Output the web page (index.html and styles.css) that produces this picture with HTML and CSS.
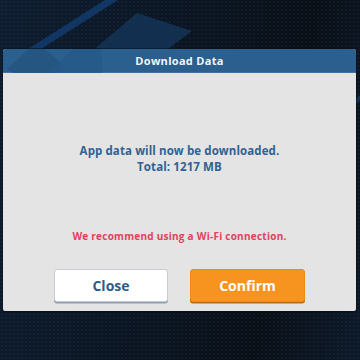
FILE: index.html
```html
<!DOCTYPE html>
<html>
<head>
<meta charset="utf-8">
<link rel="stylesheet" href="styles.css">
</head>
<body>
<div class="screen">
  <svg class="bg-deco" width="360" height="360" viewBox="0 0 360 360">
    <polygon points="105,0 118,0 30,56 17,56" fill="#123a6a" opacity="0.9"/>
    <polygon points="137,13 192,31 140,70 70,70" fill="#15365a" opacity="0.8"/>
    <polygon points="360,95 360,101 318,132 312,132" fill="#163656" opacity="0.9"/>
  </svg>
  <div class="dialog">
    <div class="dialog-header">
      <svg class="header-deco" width="120" height="24" viewBox="0 0 120 24">
        <polygon points="26,0 42,0 62,18 54,24 10,24 4,20" fill="#24547f" opacity="0.8"/>
        <polygon points="70,0 98,0 100,24 44,24" fill="#255a87" opacity="0.7"/>
      </svg>
      <span class="title">Download Data</span>
    </div>
    <div class="dialog-body">
      <p class="message">App data will now be downloaded.<br>Total: 1217 MB</p>
      <p class="warning">We recommend using a Wi-Fi connection.</p>
      <div class="actions">
        <button class="btn btn-close">Close</button>
        <button class="btn btn-confirm">Confirm</button>
      </div>
    </div>
  </div>
</div>
</body>
</html>
```
FILE: styles.css
```css
html, body {
  margin: 0;
  padding: 0;
}
body {
  width: 360px;
  height: 360px;
  overflow: hidden;
  font-family: "Open Sans", "Noto Sans", sans-serif;
}
.screen {
  position: relative;
  width: 360px;
  height: 360px;
  background:
    radial-gradient(circle, rgba(90,130,170,0.08) 0.8px, transparent 1.2px) 0 0 / 4px 4px,
    linear-gradient(100deg, #0e1d30 0%, #0b1522 45%, #0a0f17 75%, #0d1a2a 100%);
  display: flex;
  flex-direction: column;
  align-items: flex-start;
}
.bg-deco {
  position: absolute;
  left: 0;
  top: 0;
}
.dialog {
  position: relative;
  margin: 49px 0 0 3px;
  width: 353px;
  background: #e4e4e4;
  border-radius: 3px 3px 2px 2px;
  box-shadow: 0 0 0 1px rgba(10,20,30,0.6), 0 1px 2px rgba(0,0,0,0.5);
  overflow: hidden;
}
.dialog-header {
  position: relative;
  height: 24px;
  background: #2a5f8e;
  display: flex;
  align-items: center;
  justify-content: center;
  border-bottom: 1px solid #3f72a0;
  box-sizing: border-box;
}
.header-deco {
  position: absolute;
  left: 0;
  top: 0;
}
.title {
  position: relative;
  color: #f2f6fa;
  font-size: 11px;
  font-weight: 700;
  letter-spacing: 0.3px;
}
.dialog-body {
  display: flex;
  flex-direction: column;
  align-items: center;
  padding: 70px 0 9px;
}
.message {
  margin: 0;
  text-align: center;
  color: #2f6296;
  font-size: 11.5px;
  font-weight: 700;
  line-height: 16px;
  letter-spacing: 0.1px;
}
.warning {
  margin: 54px 0 0;
  color: #e2415a;
  font-size: 10px;
  font-weight: 700;
  line-height: 14px;
  letter-spacing: 0.25px;
}
.actions {
  margin-top: 26px;
  display: flex;
  gap: 22px;
}
.btn {
  width: 115px;
  height: 33px;
  border-radius: 3px;
  font-family: "Open Sans", "Noto Sans", sans-serif;
  font-size: 14px;
  font-weight: 700;
  display: flex;
  align-items: center;
  justify-content: center;
  padding: 0;
}
.btn-close {
  width: 114px;
  background: #ffffff;
  color: #2f5d8a;
  border: 1px solid #c6ccd2;
  box-shadow: 0 1.5px 0 #8e9fb0;
}
.btn-confirm {
  background: #f7931f;
  color: #ffffff;
  border: 1px solid #ee8a16;
  box-shadow: 0 1.5px 0 #b86a18;
}
```
